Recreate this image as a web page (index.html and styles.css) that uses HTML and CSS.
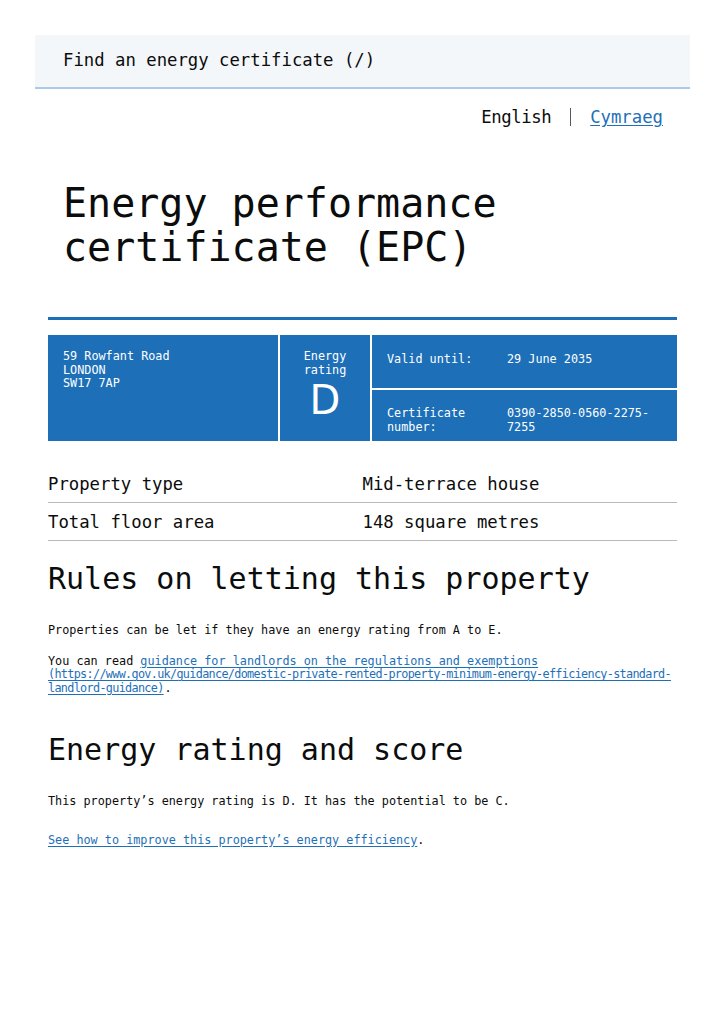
FILE: index.html
```html
<!DOCTYPE html>
<html lang="en">
<head>
<meta charset="utf-8">
<title>Energy performance certificate (EPC)</title>
<link rel="stylesheet" href="styles.css">
</head>
<body>
<header class="site-header">
  <span class="site-title">Find an energy certificate (/)</span>
</header>
<main class="page">
  <div class="lang">
    <span class="lang-current">English</span>
    <span class="lang-sep"></span>
    <a class="link" href="#">Cymraeg</a>
  </div>
  <h1 class="title">Energy performance certificate (EPC)</h1>
  <div class="rule"></div>
  <div class="summary">
    <div class="cell cell-address">59 Rowfant Road<br>LONDON<br>SW17 7AP</div>
    <div class="cell cell-rating">
      <div>Energy rating</div>
      <div class="rating-letter">D</div>
    </div>
    <div class="cell cell-info">
      <span class="info-label">Valid until:</span>
      <span class="info-value">29 June 2035</span>
    </div>
    <div class="cell cell-info">
      <span class="info-label">Certificate number:</span>
      <span class="info-value">0390-2850-0560-2275-7255</span>
    </div>
  </div>
  <dl class="props">
    <div class="prop-row"><dt>Property type</dt><dd>Mid-terrace house</dd></div>
    <div class="prop-row"><dt>Total floor area</dt><dd>148 square metres</dd></div>
  </dl>
  <h2 class="heading">Rules on letting this property</h2>
  <p class="body first">Properties can be let if they have an energy rating from A to E.</p>
  <p class="body">You can read <a class="link" href="#">guidance for landlords on the regulations and exemptions <span class="url">(https://www.gov.uk/guidance/domestic-private-rented-property-minimum-energy-efficiency-standard-landlord-guidance)</span></a>.</p>
  <h2 class="heading second">Energy rating and score</h2>
  <p class="body first">This property’s energy rating is D. It has the potential to be C.</p>
  <p class="body gap">
    <a class="link" href="#">See how to improve this property’s energy efficiency</a>.
  </p>
</main>
</body>
</html>
```

FILE: styles.css
```css
html, body {
  margin: 0;
  padding: 0;
  background: #ffffff;
}
body {
  font-family: "DejaVu Sans Mono", monospace;
  color: #0b0c0c;
}
.site-header {
  margin: 35px 34px 0 35px;
  background: #f4f7fa;
  border-bottom: 2px solid #a9cbe7;
  padding: 15px 28px 17px;
  font-size: 17.3px;
  line-height: 20px;
}
.page {
  margin: 0 47px 40px 48px;
}
.lang {
  display: flex;
  justify-content: flex-end;
  align-items: center;
  padding: 18px 14px 0 0;
  font-size: 17.3px;
  line-height: 20px;
}
.lang-current {
  letter-spacing: -0.4px;
}
.lang-sep {
  display: inline-block;
  width: 0;
  height: 18px;
  border-left: 1px solid #505a5f;
  margin: 0 19px;
}
.link {
  color: #1d70b8;
  text-decoration: underline;
  text-underline-offset: 2px;
}
.title {
  margin: 54px 0 0 15px;
  font-size: 40px;
  line-height: 44px;
  font-weight: normal;
}
.rule {
  margin-top: 48px;
  height: 3px;
  background: #1d70b8;
}
.summary {
  margin-top: 15px;
  display: grid;
  grid-template-columns: 230px 90px 1fr;
  grid-template-rows: 53px 51px;
  gap: 2px;
  color: #ffffff;
  font-size: 11.8px;
  line-height: 13.5px;
}
.cell {
  background: #1d6fb8;
}
.cell-address {
  grid-row: 1 / 3;
  padding: 15px 15px;
}
.cell-rating {
  grid-row: 1 / 3;
  padding: 15px 4px 0;
  text-align: center;
}
.rating-letter {
  margin-top: 3px;
  font-family: "DejaVu Sans", sans-serif;
  font-size: 40px;
  line-height: 40px;
}
.cell-info {
  display: grid;
  grid-template-columns: 120px 1fr;
  align-items: start;
  padding: 17px 15px 0;
}
.cell-info:nth-child(3) {
  padding-top: 18px;
}
.props {
  margin: 24px 0 0;
}
.prop-row {
  display: grid;
  grid-template-columns: 1fr 1fr;
  padding: 9px 0 8px;
  border-bottom: 1px solid #b8babb;
  font-size: 17.3px;
  line-height: 20px;
}
.prop-row dt, .prop-row dd {
  margin: 0;
}
.heading {
  margin: 20px 0 0;
  font-size: 30px;
  line-height: 36px;
  font-weight: normal;
}
.heading.second {
  margin-top: 37px;
}
.body {
  margin: 17px 0 0;
  font-size: 11.8px;
  line-height: 13.5px;
}
.body.first {
  margin-top: 27px;
}
.body.gap {
  margin-top: 25px;
}
.url {
  letter-spacing: -0.68px;
  margin-right: 1px;
}
```
